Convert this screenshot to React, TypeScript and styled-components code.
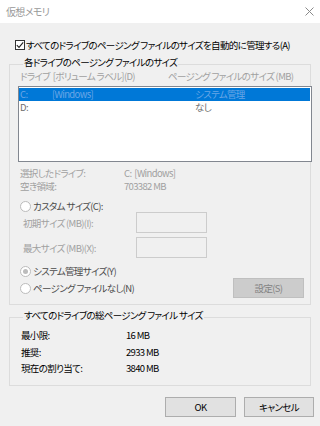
import React from "react";
import styled, { createGlobalStyle } from "styled-components";

const Global = createGlobalStyle`
  html, body { margin: 0; padding: 0; background: #f0f0f0; }
  body { font-family: "Noto Sans CJK JP", "Noto Sans", sans-serif; }
  * { box-sizing: border-box; }
`;

const Window = styled.div`
  width: 320px;
  height: 426px;
  background: #f0f0f0;
  display: flex;
  flex-direction: column;
  font-family: "Noto Sans CJK JP", "Noto Sans", sans-serif;
  font-size: 9.5px;
  letter-spacing: -0.65px;
  font-feature-settings: "palt" 1;
  color: #000;
  overflow: hidden;
`;

const TitleBar = styled.div`
  flex: none;
  height: 23px;
  background: #fff;
  display: flex;
  align-items: center;
  justify-content: space-between;
  padding: 0 6px 0 6px;
`;

const Title = styled.span`
  color: #999;
  font-size: 10px;
`;

const Content = styled.div`
  display: flex;
  flex-direction: column;
  padding: 0 9px;
`;

const CheckRow = styled.label`
  display: flex;
  align-items: center;
  height: 12px;
  line-height: 12px;
  margin: 16px 0 0 6px;
  gap: 1px;
  white-space: nowrap;
`;

const CheckBox = styled.span`
  width: 10px;
  height: 10px;
  border: 1px solid #333;
  background: #fff;
  display: flex;
  align-items: center;
  justify-content: center;
  flex: none;
`;

const Group = styled.fieldset<{ $mt: number; $pb: number }>`
  margin: ${(p) => p.$mt}px 0 0 0;
  padding: 0 0 ${(p) => p.$pb}px 8px;
  border: 1px solid #dcdcdc;
  min-width: 0;
  display: flex;
  flex-direction: column;
`;

const Legend = styled.legend`
  padding: 0 1px 4px 1px;
  margin-left: 5px;
  line-height: 8px;
  white-space: nowrap;
`;

const HeaderRow = styled.div`
  display: grid;
  grid-template-columns: 148px 1fr;
  height: 12px;
  line-height: 12px;
  padding-left: 2px;
  color: #a0a0a0;
  white-space: nowrap;
`;

const ListBox = styled.div`
  margin: 4px -2px 0 0;
  height: 76px;
  border: 1px solid #828790;
  background: #fff;
  padding: 1px 1px 0 0;
  display: flex;
  flex-direction: column;
`;

const ListRow = styled.div<{ $selected?: boolean }>`
  display: grid;
  grid-template-columns: 32px 143px 1fr;
  height: 13px;
  line-height: 13px;
  padding-left: 1px;
  white-space: nowrap;
  background: ${(p) => (p.$selected ? "#0078d7" : "transparent")};
  color: ${(p) => (p.$selected ? "#6aa6e6" : "#6d6d6d")};
`;

const InfoRow = styled.div<{ $mt?: number }>`
  display: grid;
  grid-template-columns: 104px 1fr;
  height: 13px;
  line-height: 13px;
  padding-left: 2px;
  margin-top: ${(p) => p.$mt ?? 0}px;
  color: #a0a0a0;
  white-space: nowrap;
`;

const RadioRow = styled.div<{ $mt?: number }>`
  display: flex;
  align-items: center;
  height: 12px;
  line-height: 12px;
  padding-left: 2px;
  margin-top: ${(p) => p.$mt ?? 0}px;
  gap: 2px;
  color: #4a4a4a;
  white-space: nowrap;
`;

const RadioCircle = styled.span<{ $checked?: boolean }>`
  width: 11px;
  height: 11px;
  border-radius: 50%;
  border: 1px solid #bcbcbc;
  background: #fff;
  flex: none;
  display: flex;
  align-items: center;
  justify-content: center;
  &::after {
    content: "";
    width: 5px;
    height: 5px;
    border-radius: 50%;
    background: ${(p) => (p.$checked ? "#bcbcbc" : "transparent")};
  }
`;

const FieldRow = styled.div<{ $mt?: number }>`
  display: grid;
  grid-template-columns: 113px 71px;
  align-items: center;
  height: 21px;
  padding-left: 5px;
  margin-top: ${(p) => p.$mt ?? 0}px;
  color: #a0a0a0;
  white-space: nowrap;
`;

const Input = styled.div`
  width: 71px;
  height: 21px;
  border: 1px solid #cccccc;
  background: #f0f0f0;
`;

const BottomRow = styled.div`
  display: flex;
  align-items: center;
  justify-content: space-between;
  height: 20px;
  margin-top: 1px;
  padding-right: 6px;
`;

const Button = styled.div<{ $w: number; $disabled?: boolean }>`
  width: ${(p) => p.$w}px;
  height: 20px;
  display: flex;
  align-items: center;
  justify-content: center;
  border: 1px solid ${(p) => (p.$disabled ? "#bfbfbf" : "#adadad")};
  background: ${(p) => (p.$disabled ? "#cccccc" : "#e1e1e1")};
  color: ${(p) => (p.$disabled ? "#838383" : "#000")};
  white-space: nowrap;
`;

const TotalRow = styled.div`
  display: grid;
  grid-template-columns: 105px 1fr;
  height: 16.5px;
  line-height: 16.5px;
  padding-left: 3px;
  white-space: nowrap;
`;

const TotalList = styled.div`
  display: flex;
  flex-direction: column;
  margin-top: 4px;
`;

const Footer = styled.div`
  display: flex;
  justify-content: flex-end;
  gap: 8px;
  padding-right: 6px;
  margin-top: 11px;
`;

const CloseIcon = () => (
  <svg width="9" height="9" viewBox="0 0 9 9">
    <path d="M0.5 0.5L8.5 8.5M8.5 0.5L0.5 8.5" stroke="#8a8a8a" strokeWidth="1" />
  </svg>
);

const CheckMark = () => (
  <svg width="8" height="8" viewBox="0 0 8 8">
    <path d="M0.8 4.2L3 6.4L7.2 1.4" fill="none" stroke="#222" strokeWidth="1.1" />
  </svg>
);

export default function App() {
  return (
    <>
      <Global />
      <Window>
        <TitleBar>
          <Title>仮想メモリ</Title>
          <CloseIcon />
        </TitleBar>
        <Content>
          <CheckRow>
            <CheckBox>
              <CheckMark />
            </CheckBox>
            <span>すべてのドライブのページング ファイルのサイズを自動的に管理する(A)</span>
          </CheckRow>
          <Group $mt={7} $pb={6}>
            <Legend>各ドライブのページング ファイルのサイズ</Legend>
            <HeaderRow>
              <span>ドライブ&nbsp;&nbsp;[ボリューム ラベル](D)</span>
              <span>ページング ファイルのサイズ (MB)</span>
            </HeaderRow>
            <ListBox>
              <ListRow $selected>
                <span>C:</span>
                <span>[Windows]</span>
                <span>システム管理</span>
              </ListRow>
              <ListRow>
                <span>D:</span>
                <span></span>
                <span>なし</span>
              </ListRow>
            </ListBox>
            <InfoRow $mt={5}>
              <span>選択したドライブ:</span>
              <span>C:&nbsp;&nbsp;[Windows]</span>
            </InfoRow>
            <InfoRow>
              <span>空き領域:</span>
              <span>703382 MB</span>
            </InfoRow>
            <RadioRow $mt={7}>
              <RadioCircle />
              <span>カスタム サイズ(C):</span>
            </RadioRow>
            <FieldRow>
              <span>初期サイズ (MB)(I):</span>
              <Input />
            </FieldRow>
            <FieldRow $mt={4}>
              <span>最大サイズ (MB)(X):</span>
              <Input />
            </FieldRow>
            <RadioRow $mt={7}>
              <RadioCircle $checked />
              <span>システム管理サイズ(Y)</span>
            </RadioRow>
            <BottomRow>
              <RadioRow>
                <RadioCircle />
                <span>ページング ファイルなし(N)</span>
              </RadioRow>
              <Button $w={71} $disabled>
                設定(S)
              </Button>
            </BottomRow>
          </Group>
          <Group $mt={6} $pb={8}>
            <Legend>すべてのドライブの総ページング ファイル サイズ</Legend>
            <TotalList>
              <TotalRow>
                <span>最小限:</span>
                <span>16 MB</span>
              </TotalRow>
              <TotalRow>
                <span>推奨:</span>
                <span>2933 MB</span>
              </TotalRow>
              <TotalRow>
                <span>現在の割り当て:</span>
                <span>3840 MB</span>
              </TotalRow>
            </TotalList>
          </Group>
        </Content>
        <Footer>
          <Button $w={71}>OK</Button>
          <Button $w={70}>キャンセル</Button>
        </Footer>
      </Window>
    </>
  );
}
